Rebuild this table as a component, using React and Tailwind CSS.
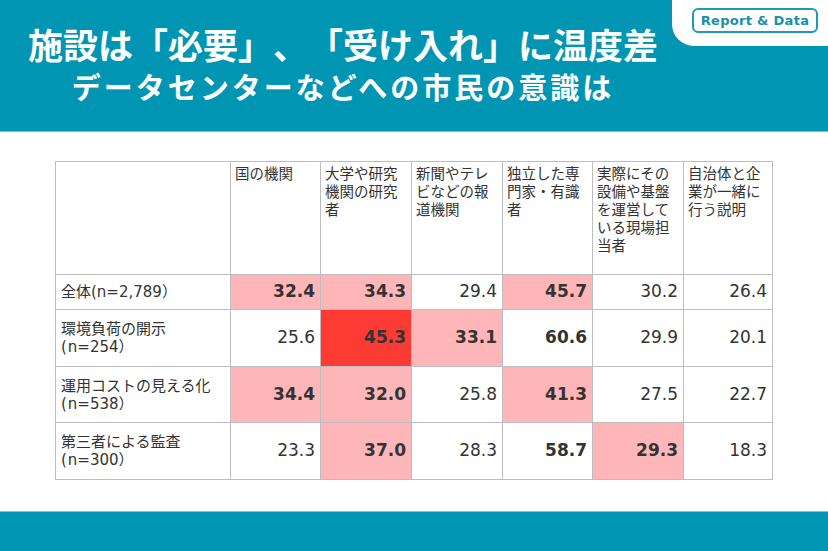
const headers = [
  '国の機関',
  '大学や研究\n機関の研究\n者',
  '新聞やテレ\nビなどの報\n道機関',
  '独立した専\n門家・有識\n者',
  '実際にその\n設備や基盤\nを運営して\nいる現場担\n当者',
  '自治体と企\n業が一緒に\n行う説明',
];

const colWidths = ['w-[90px]', 'w-[91px]', 'w-[91px]', 'w-[90px]', 'w-[91px]', 'w-[89px]'];

// tone: 0 = plain, 1 = pink, 2 = red, 3 = bold on white
const rows = [
  {
    label: '全体',
    n: '2,789',
    h: 'h-[35px]',
    cells: [['32.4', 1], ['34.3', 1], ['29.4', 0], ['45.7', 1], ['30.2', 0], ['26.4', 0]],
  },
  {
    label: '環境負荷の開示',
    n: '254',
    h: 'h-[57px]',
    cells: [['25.6', 0], ['45.3', 2], ['33.1', 1], ['60.6', 3], ['29.9', 0], ['20.1', 0]],
  },
  {
    label: '運用コストの見える化',
    n: '538',
    h: 'h-[56px]',
    cells: [['34.4', 1], ['32.0', 1], ['25.8', 0], ['41.3', 1], ['27.5', 0], ['22.7', 0]],
  },
  {
    label: '第三者による監査',
    n: '300',
    h: 'h-[57px]',
    cells: [['23.3', 0], ['37.0', 1], ['28.3', 0], ['58.7', 3], ['29.3', 1], ['18.3', 0]],
  },
];

const toneClass = {
  0: 'bg-white font-normal',
  1: 'bg-[#ffb6b8] font-bold',
  2: 'bg-[#fd3b34] font-bold',
  3: 'bg-white font-bold',
};

const jp = { fontFamily: '"Noto Sans CJK JP", sans-serif' };
const mix = { fontFamily: '"DejaVu Sans", "Noto Sans CJK JP", sans-serif' };

const RowLabel = ({ label, n }) => {
  // first row keeps the count on the same line
  if (n === '2,789') {
    return (
      <div>
        {label}(n={n}）
      </div>
    );
  }
  return (
    <>
      <div>{label}</div>
      <div>
        <span className="mr-[1px]">(</span>n={n}）
      </div>
    </>
  );
};

const App = () => {
  return (
    <div className="w-[828px] h-[551px] bg-white flex flex-col overflow-hidden">
      {/* Title band */}
      <header className="relative h-[132px] bg-[#0096b3] border-b border-[#74c6d6] shrink-0">
        <div className="absolute top-0 right-0 w-[156px] h-[46px] bg-white rounded-bl-[22px] flex items-start justify-end pt-[8px] pr-[10px]">
          <div
            className="w-[126px] h-[25px] border-2 border-[#1a9bb6] rounded-[6px] flex items-center justify-center text-[13px] tracking-[0.3px] font-bold text-[#1a8fab]"
            style={{ fontFamily: '"DejaVu Sans", sans-serif' }}
          >
            Report &amp; Data
          </div>
        </div>

        <div
          className="w-[686px] flex flex-col items-center pt-[24px] text-white font-bold [text-spacing-trim:space-all]"
          style={jp}
        >
          <h1 className="text-[35px] leading-[40px]">施設は「必要」、「受け入れ」に温度差</h1>
          <h2 className="mt-[5px] text-[29px] leading-[34px] tracking-[3px]">データセンターなどへの市民の意識は</h2>
        </div>
      </header>

      {/* Table */}
      <main className="flex-1 pt-[29px] pl-[55px]">
        <table className="border-collapse border-[1.5px] border-[#555] text-[#333] table-fixed">
          <thead>
            <tr className="h-[113px]">
              <th className="w-[175px] border border-[#bdbdbd]" />
              {headers.map((h, i) => (
                <th
                  key={i}
                  className={`${colWidths[i]} border border-[#bdbdbd] align-top text-left font-normal pl-[4px] pt-[2px] text-[14.5px] leading-[18px] whitespace-pre`}
                  style={jp}
                >
                  {h}
                </th>
              ))}
            </tr>
          </thead>
          <tbody>
            {rows.map((r, ri) => (
              <tr key={ri} className={r.h}>
                <td className="border border-[#bdbdbd] pl-[5px] text-[15px] leading-[18px] align-middle" style={mix}>
                  <RowLabel label={r.label} n={r.n} />
                </td>
                {r.cells.map(([v, t], ci) => (
                  <td
                    key={ci}
                    className={`border border-[#bdbdbd] text-right pr-[5px] text-[17px] align-middle ${toneClass[t]}`}
                    style={{ fontFamily: '"DejaVu Sans", sans-serif' }}
                  >
                    {v}
                  </td>
                ))}
              </tr>
            ))}
          </tbody>
        </table>
      </main>

      {/* Footer band */}
      <footer className="h-[40px] bg-[#0096b3] border-t border-[#74c6d6] shrink-0" />
    </div>
  );
};

export default App;
